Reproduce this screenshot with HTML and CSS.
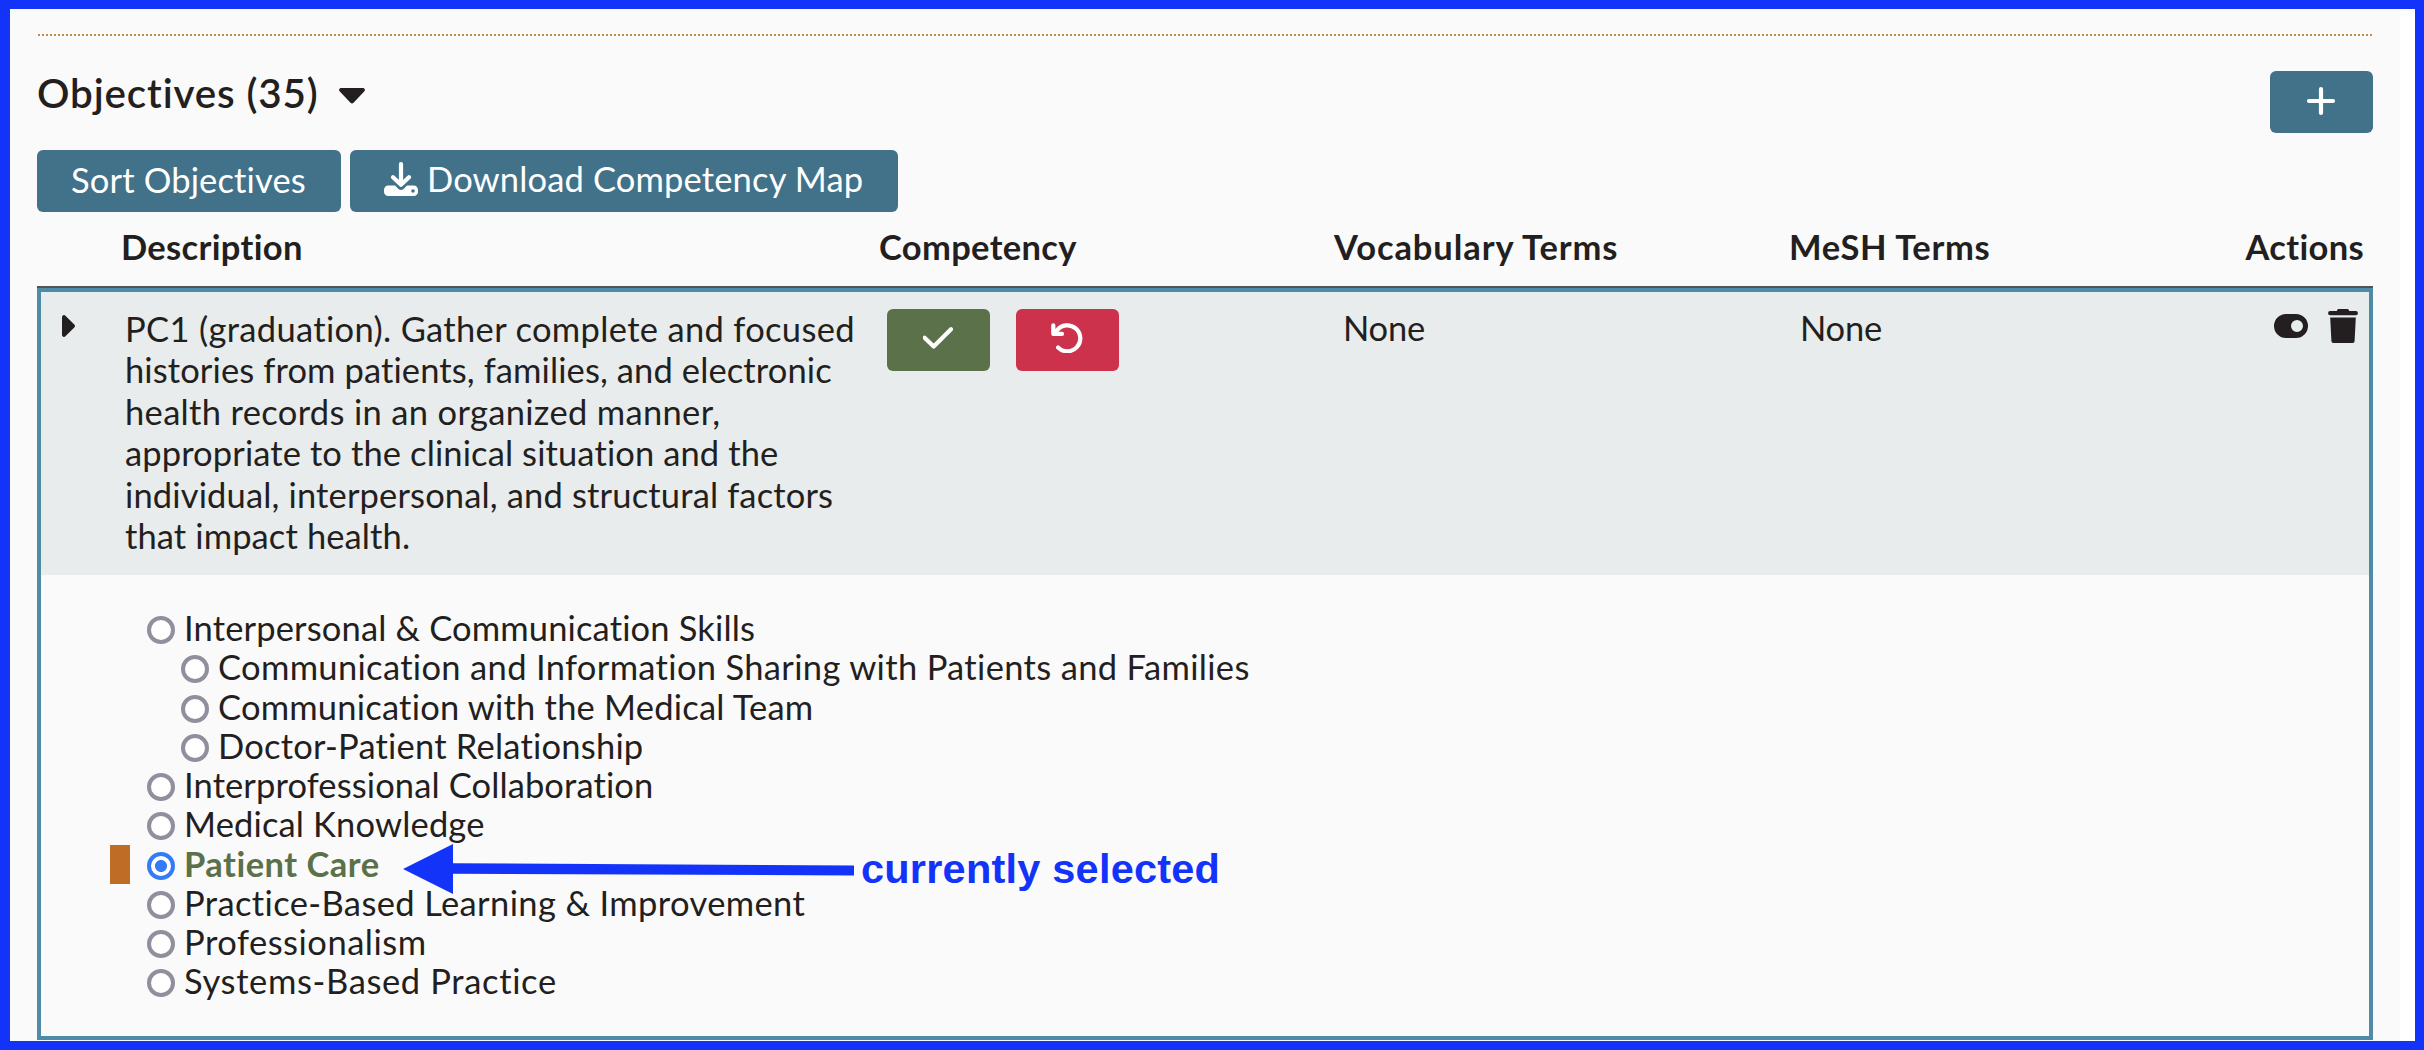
FILE: index.html
```
<!DOCTYPE html>
<html lang="en">
<head>
<meta charset="utf-8">
<title>Objectives</title>
<link rel="stylesheet" href="styles.css">
</head>
<body>
<main class="page">
  <div class="rule"></div>
  <header class="header">
    <h2 class="title">Objectives (35)
      <svg class="caret-down" viewBox="0 0 26 16"><path d="M2.2 0H23.8A2 2 0 0 1 25.2 3.5L14.5 14.8a2.1 2.1 0 0 1-3 0L.8 3.5A2 2 0 0 1 2.2 0Z"/></svg>
    </h2>
    <button class="btn icon-btn">
      <svg class="line" width="30" height="30" viewBox="0 0 30 30"><path d="M15 3v24M3 15h24"/></svg>
    </button>
  </header>
  <div class="toolbar">
    <button class="btn sort">Sort Objectives</button>
    <button class="btn download">
      <svg width="34" height="34" viewBox="0 0 34 34"><path class="arrow" d="M17 2.1V22M9 15.2l8 7.6 8-7.6"/><path class="tray" fill-rule="evenodd" d="M4.3 23.6H11l3.2 3.1a4.1 4.1 0 0 0 5.6 0l3.2-3.1h6.7A4.3 4.3 0 0 1 34 27.9v1.8A4.3 4.3 0 0 1 29.7 34H4.3A4.3 4.3 0 0 1 0 29.7v-1.8A4.3 4.3 0 0 1 4.3 23.6ZM29 27.2a1.8 1.8 0 1 0 0 3.6 1.8 1.8 0 0 0 0-3.6Z"/></svg>
      <span>Download Competency Map</span>
    </button>
  </div>
  <div class="thead">
    <span></span>
    <span class="ls-3">Description</span>
    <span class="ls-3">Competency</span>
    <span class="ls-8">Vocabulary Terms</span>
    <span class="ls-6">MeSH Terms</span>
    <span class="right ls-3">Actions</span>
  </div>
  <section class="objective">
    <div class="row">
      <svg class="caret-right" viewBox="0 0 13 22"><path d="M0 2.2A2 2 0 0 1 3.4.7L12.3 9.6a2 2 0 0 1 0 2.8L3.4 21.3A2 2 0 0 1 0 19.8Z"/></svg>
      <p class="description"><span class="ls-3">PC1 (graduation). Gather complete and focused</span><br><span class="ls-1">histories from patients, families, and electronic</span><br><span class="ls-3">health records in an organized manner,</span><br><span class="ls-1">appropriate to the clinical situation and the</span><br><span class="ls-15">individual, interpersonal, and structural factors</span><br><span class="ls-1">that impact health.</span></p>
      <div class="confirm">
        <button class="btn icon-btn save">
          <svg class="line" width="30" height="30" viewBox="0 0 30 30"><path d="M1.6 13.7l9.1 8.9L28 5.3"/></svg>
        </button>
        <button class="btn icon-btn undo">
          <svg class="line" width="32" height="30" viewBox="0 0 32 30"><path d="M7.1 24.5A13 13 0 1 0 6 7.4"/><path class="head" d="M2.3 2.3V10.9H11"/><path class="corner" d="M2.3 4.5V10.9H8.5L6.5 8.5Z"/></svg>
        </button>
      </div>
      <span class="none">None</span>
      <span class="none">None</span>
      <div class="actions">
        <svg width="34" height="34" viewBox="0 0 34 34"><path fill-rule="evenodd" d="M12 5H22a12 12 0 0 1 0 24H12A12 12 0 0 1 12 5ZM23 11a6 6 0 1 0 0 12 6 6 0 0 0 0-12Z"/></svg>
        <svg width="30" height="34" viewBox="0 0 30 34"><path d="M10.6 0h8.8a1.5 1.5 0 0 1 1.4 1l.4 1.1h6.7a2 2 0 0 1 0 4.1H2.1a2 2 0 0 1 0-4.1H8.8L9.2 1a1.5 1.5 0 0 1 1.4-1ZM2.2 8.6H27.8L26.6 32a2 2 0 0 1-2 2H5.4a2 2 0 0 1-2-2Z"/></svg>
      </div>
    </div>
    <ul class="competencies">
      <li class="ls-15"><i class="radio"></i>Interpersonal &amp; Communication Skills</li>
      <li class="child ls-3"><i class="radio"></i>Communication and Information Sharing with Patients and Families</li>
      <li class="child ls-2"><i class="radio"></i>Communication with the Medical Team</li>
      <li class="child ls-2"><i class="radio"></i>Doctor-Patient Relationship</li>
      <li class="ls-1"><i class="radio"></i>Interprofessional Collaboration</li>
      <li class="ls-15"><i class="radio"></i>Medical Knowledge</li>
      <li class="selected ls-5"><i class="radio"></i>Patient Care</li>
      <li class="ls-4"><i class="radio"></i>Practice-Based Learning &amp; Improvement</li>
      <li class="ls-5"><i class="radio"></i>Professionalism</li>
      <li class="ls-6"><i class="radio"></i>Systems-Based Practice</li>
    </ul>
  </section>
  <div class="note">
    <svg width="452" height="50" viewBox="0 0 452 50"><path d="M0 25 50 0V19.3L451 21.5V31.5L50 29.8V50Z"/></svg>
    <span>currently selected</span>
  </div>
</main>
</body>
</html>
```
FILE: styles.css
```
* { box-sizing: border-box; }

body { margin: 0; background: #fff; }

.page {
  position: relative;
  width: 2424px;
  height: 1050px;
  padding: 25px 42px 0 27px;
  overflow: hidden;
  border: 9px solid #1433f9;
  border-left-width: 10px;
  background: linear-gradient(to left, #fff 15px, #fafafa 15px);
  color: #231f20;
  font: 34.5px/41.4px Lato, "Open Sans", sans-serif;
  font-variant-ligatures: none;
}

svg { flex: none; fill: currentColor; }

.line { fill: none; stroke: currentColor; stroke-width: 4.2; stroke-linecap: round; stroke-linejoin: round; }

.ls-1 { letter-spacing: 0.11px; }
.ls-15 { letter-spacing: 0.15px; }
.ls-2 { letter-spacing: 0.21px; }
.ls-3 { letter-spacing: 0.33px; }
.ls-4 { letter-spacing: 0.37px; }
.ls-5 { letter-spacing: 0.5px; }
.ls-6 { letter-spacing: 0.64px; }
.ls-8 { letter-spacing: 0.92px; }

.rule {
  height: 2px;
  margin-left: 1px;
  background: repeating-linear-gradient(to right, #c98b4b 0 2px, transparent 2px 4px);
}

.header {
  display: flex;
  justify-content: space-between;
  align-items: flex-start;
  height: 62px;
  margin-top: 35px;
}

.title {
  display: flex;
  align-items: center;
  gap: 20px;
  margin: -2px 0 0;
  font-size: 40.4px;
  font-weight: 600;
  line-height: 48px;
  letter-spacing: 0.85px;
}

.caret-down { width: 26px; height: 16px; margin-top: 5px; }

.btn {
  display: flex;
  align-items: center;
  justify-content: center;
  height: 62px;
  padding: 0;
  border: 0;
  border-radius: 6px;
  background: #417289;
  color: #fff;
  font: inherit;
}

.icon-btn { width: 103px; padding: 0 1px 3px 0; }

.toolbar { display: flex; gap: 9px; margin-top: 17px; }

.sort { width: 304px; padding: 0 1px 3px 0; letter-spacing: 0.15px; }

.download { width: 548px; justify-content: flex-start; gap: 9px; padding: 0 0 4px 34px; letter-spacing: 0.15px; }

.download .arrow { fill: none; stroke: currentColor; stroke-width: 4.2; stroke-linecap: round; stroke-linejoin: round; }

.thead {
  display: grid;
  grid-template-columns: 84px 758px 455px 455px 400px 1fr;
  height: 76px;
  padding-right: 9px;
  border-bottom: 2px solid #515454;
  font-weight: 700;
  line-height: 70.6px;
}

.right { text-align: right; }

.objective { height: 752px; border: 4px solid #4e8ba7; }

.row {
  display: grid;
  grid-template-columns: 84px 762px 456px 457px 400px 1fr;
  grid-template-columns: 84px 762px 456px 457px 1fr 84px;
  align-items: start;
  height: 283px;
  padding-right: 11px;
  background: #e8ecec;
}

.caret-right { width: 13px; height: 22px; margin: 23px 0 0 21px; }

.description { margin: 16px 0 0; white-space: nowrap; }

.confirm { display: flex; gap: 26px; margin-top: 17px; }

.save { background: #5b7149; }
.undo { background: #cc324b; }
.icon-btn.undo { padding-bottom: 4px; }
.undo .corner { fill: currentColor; stroke-width: 1; }

.none { margin-top: 15px; letter-spacing: -0.2px; }

.actions { grid-column: 6; display: flex; justify-content: flex-end; gap: 20px; margin-top: 17px; }

.competencies { margin: 32px 0 0; padding: 0 0 0 106px; list-style: none; }

.competencies li {
  display: flex;
  position: relative;
  align-items: flex-start;
  gap: 9px;
  height: 39.26px;
  line-height: 41.2px;
}

.competencies .child { padding-left: 34px; }

.radio {
  flex: none;
  width: 28px;
  height: 28px;
  margin-top: 9px;
  border: 4px solid #8f8f9d;
  border-radius: 50%;
  background: #fff;
}

.selected { color: #5b7149; font-weight: 700; }

.selected .radio { border-color: #347cf6; background: radial-gradient(circle, #347cf6 5.6px, #fff 6.4px); }

.selected::before {
  content: "";
  position: absolute;
  top: 2px;
  left: -37px;
  width: 20px;
  height: 39px;
  background: #bf6d26;
}

/* callout laid over the list */
.note {
  position: absolute;
  top: 835px;
  left: 393px;
  display: flex;
  gap: 6px;
  color: #1433f9;
  font: 700 41.5px/50px "Liberation Sans", Arial, sans-serif;
  letter-spacing: 0.22px;
}
```
